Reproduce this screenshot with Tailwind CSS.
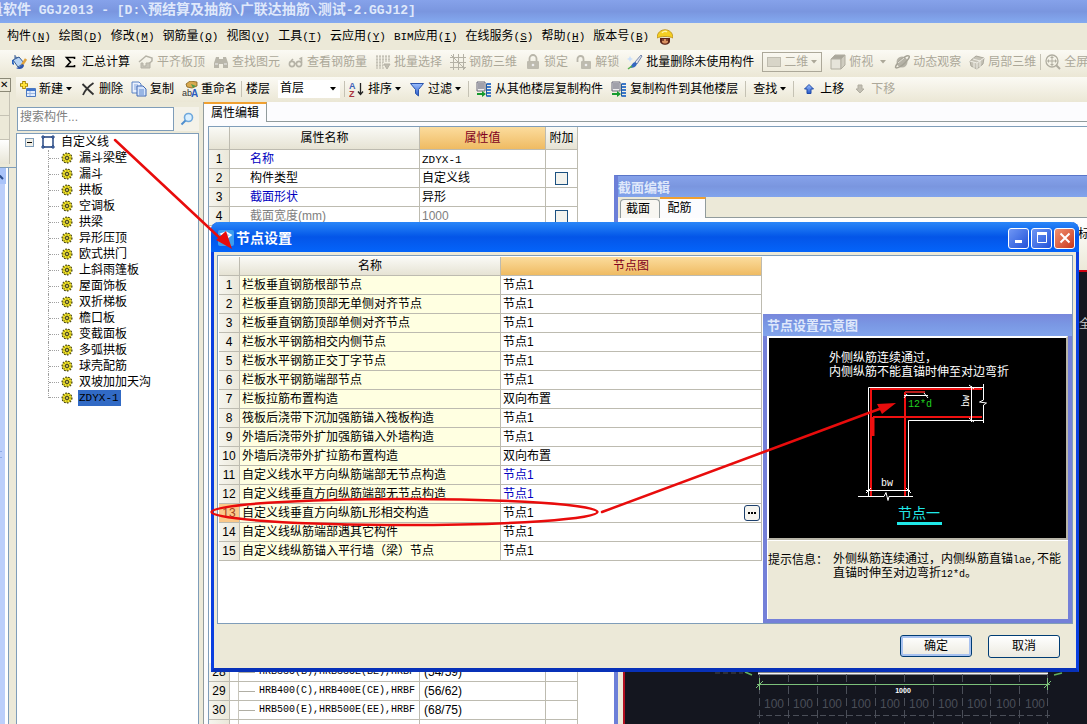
<!DOCTYPE html>
<html lang="zh-CN">
<head>
<meta charset="utf-8">
<title>GGJ2013</title>
<script src="https://cdn.jsdelivr.net/npm/@tailwindcss/browser@4"></script>
</head>
<body class="relative flex h-screen flex-col overflow-hidden bg-[#ece9d8] font-['Liberation_Sans','Noto_Sans_CJK_SC',sans-serif] text-[12px] leading-4 whitespace-nowrap text-black">

<svg class="absolute size-0">
  <symbol id="gear" viewBox="0 0 12 12">
    <circle cx="6" cy="6" r="4.800" fill="#f0e020" stroke="#3a3810" stroke-width="1.400" stroke-dasharray="1.600 1.300"/>
    <circle cx="6" cy="6" r="4.200" fill="#f4e628"/>
    <path d="M6 1v10M1 6h10M2.500 2.500l7 7M9.500 2.500l-7 7" stroke="#8b8416" stroke-width=".8"/>
    <circle cx="6" cy="6" r="1.500" fill="#fff36b" stroke="#222" stroke-width=".9"/>
  </symbol>
  <symbol id="down" viewBox="0 0 6 4"><path d="M0 0h6L3 3.500z" fill="currentColor"/></symbol>
  <linearGradient id="steel" x1="0" y1="0" x2="0" y2="1"><stop offset="0" stop-color="#9cc0ff"/><stop offset="1" stop-color="#2758c8"/></linearGradient>
  <symbol id="floors" viewBox="0 0 16 16">
    <path d="M1 1h8v9H1z" fill="#eee" stroke="#667"/><path d="M2 3h6M2 5h6M2 7h6" stroke="#556" stroke-width="1.200"/>
    <path d="M11 3h4M11 6h4M11 9h4M11 12h4M11 15h4" stroke="#3c78c8" stroke-width="1.800"/><path d="M10.500 2.500v13" stroke="#235a9c"/>
    <path d="M1 12h5v-2l4 3-4 3v-2H1z" fill="#169a2e"/>
  </symbol>
</svg>

<header class="flex h-[23px] shrink-0 items-center overflow-hidden bg-linear-to-b from-[#86a2ea] via-[#7a96df] to-[#84aaf0] pb-1 text-[14px] font-bold text-[#dfe8fb]">
  <h1 class="-ml-[11px] text-[14px]">量软件<span class="font-['Liberation_Mono',monospace] text-[13px] whitespace-pre"> GGJ2013 - [D:\</span>预结算及抽筋<span class="font-['Liberation_Mono',monospace] text-[13px]">\</span>广联达抽筋<span class="font-['Liberation_Mono',monospace] text-[13px]">\</span>测试<span class="font-['Liberation_Mono',monospace] text-[13px]">-2.GGJ12]</span></h1>
</header>

<nav id="menu" class="flex h-[27px] shrink-0 items-center gap-2 pl-[7px]"></nav>

<div class="flex h-[27px] shrink-0 items-start gap-2 overflow-hidden bg-linear-to-b from-[#fbfaf4] to-[#ebe7d5] pt-1 pl-3 text-[#aca899]">
  <button class="flex shrink-0 items-center gap-[3px] text-black"><svg class="size-4" viewBox="0 0 16 16"><path d="M3 1v5M3 3l5 1" stroke="#345a94" fill="none"/><path d="M1 6l6-3 5 6-6 4z" fill="#b7d4f4" stroke="#345a94"/><path d="M1 6c-1 3 0 4 1 4" stroke="#2a63bd" stroke-width="2" fill="none"/><path d="M14 5l-4 6" stroke="#e0a23c" stroke-width="2.500"/><path d="M10 10c-1 3-4 3-6 4 3 2 8 1 8-3z" fill="#2b55ad"/></svg>绘图</button>
  <button class="flex shrink-0 items-center gap-[3px] text-black"><svg class="size-4" viewBox="0 0 16 16"><path d="M11.500 5V3.500H3.500l4 4.500-4 4.500h8V11" fill="none" stroke="#000" stroke-width="1.600"/></svg>汇总计算</button>
  <button class="flex shrink-0 items-center gap-[3px]"><svg class="size-4" viewBox="0 0 16 16" fill="none" stroke="#b5b2a6"><path d="M1 8l7-6 6 2v3l-7 6" stroke-width="1.500"/><path d="M3 9v5h9V9H8v3H5V9z" fill="#c7c4b8"/></svg>平齐板顶</button>
  <button class="flex shrink-0 items-center gap-[3px]"><svg class="size-4" viewBox="0 0 16 16" fill="#b9b6aa"><path d="M3 3h3v2h4V3h3l2 6v5h-5v-4H6v4H1V9z"/><path d="M2 10h3M11 10h3" stroke="#eee"/></svg>查找图元</button>
  <button class="flex shrink-0 items-center gap-[3px]"><svg class="size-4" viewBox="0 0 16 16" fill="none" stroke="#b5b2a6" stroke-width="1.600"><circle cx="4" cy="10" r="2.600"/><circle cx="11" cy="10" r="2.600"/><path d="M6.500 9.500h2M13.500 9V4l-2 1M3 7l2-2"/></svg>查看钢筋量</button>
  <button class="flex shrink-0 items-center gap-[3px]"><svg class="size-4" viewBox="0 0 16 16" fill="none" stroke="#b5b2a6"><path d="M1 3h14M1 6h14M1 9h7M1 12h7M2 1v14M5 1v14M8 1v14M11 1v7M14 1v7" stroke-dasharray="2 1"/><path d="M9 10h6l-3 5z" fill="#c0bdb0"/></svg>批量选择</button>
  <button class="flex shrink-0 items-center gap-[3px]"><svg class="size-4" viewBox="0 0 16 16" fill="none" stroke="#b5b2a6"><path d="M0 3.500h16M0 8.500h16M0 13.500h16M3.500 0v16M8.500 0v16M13.500 0v16M1 1l14 14"/></svg>钢筋三维</button>
  <button class="flex shrink-0 items-center gap-[3px]"><svg class="size-4" viewBox="0 0 16 16"><path d="M4.500 8V4.500a3.500 3.500 0 0 1 7 0V8" fill="none" stroke="#b9b6aa" stroke-width="1.800"/><rect x="2" y="7" width="12" height="8" rx="1" fill="#bebbaf"/><circle cx="8" cy="11" r="1.300" fill="#eee"/></svg>锁定</button>
  <button class="flex shrink-0 items-center gap-[3px]"><svg class="size-4" viewBox="0 0 16 16"><path d="M1.500 8V5a3 3 0 0 1 6 0v3" fill="none" stroke="#b9b6aa" stroke-width="1.800"/><rect x="5" y="7" width="10" height="8" rx="1" fill="#bebbaf"/><circle cx="10" cy="11" r="1.300" fill="#eee"/></svg>解锁</button>
  <button class="flex shrink-0 items-center gap-[3px] text-black"><svg class="size-4" viewBox="0 0 16 16"><path d="M14 1L8 8l2 2 5-8z" fill="#dfe3ee" stroke="#556b9b" stroke-width=".8"/><path d="M8 8l2 2c-1 3-4 4-7 4 1-2 2-5 5-6z" fill="#3468c0"/><path d="M1 15l4-3" stroke="#53b04a" stroke-width="1.500"/><path d="M3 2l1 2 2 1-2 1-1 2-1-2-2-1 2-1z" fill="#cbe0fb"/></svg>批量删除未使用构件</button>
  <button class="-mt-0.5 flex h-5 w-[60px] shrink-0 items-center justify-between border border-[#aca899] px-1" aria-label="二维"><span class="h-2.5 w-3.5 border border-[#c0bdb0] bg-[#d8d5c8]"></span>二维<svg class="h-1 w-1.5"><use href="#down"/></svg></button>
  <button class="flex shrink-0 items-center gap-[3px]"><svg class="size-4" viewBox="0 0 16 16" stroke="#b0ada0"><path d="M1 5l4-4h10l-4 4z" fill="#aaa79b"/><path d="M1 5h10v10H1z" fill="#e6e4da"/><path d="M11 5l4-4v10l-4 4z" fill="#cfccc0"/></svg>俯视<svg class="ml-1 h-1 w-1.5"><use href="#down"/></svg></button>
  <button class="flex shrink-0 items-center gap-[3px]"><svg class="size-4" viewBox="0 0 16 16"><circle cx="8" cy="8" r="5.500" fill="#b5b2a6"/><path d="M2 14C-1 12 12 0 15 2c2 2-8 12-13 12" fill="none" stroke="#a5a295" stroke-width="1.500"/><path d="M4 9l6-5" stroke="#e5e3d9"/></svg>动态观察</button>
  <button class="flex shrink-0 items-center gap-[3px]"><svg class="size-4" viewBox="0 0 16 16"><path d="M1 7l6-5 8 2-1 6-6 5-6-3z" fill="#c5c2b6" stroke="#aaa79b"/><path d="M1 7l7 2 7-5M8 9v6M4 5l7 2v6M5 8v6" stroke="#f0eee6" fill="none"/></svg>局部三维</button>
  <span class="-mx-1 h-4 w-px shrink-0 bg-[#c5c2b4]"></span>
  <button class="flex shrink-0 items-center gap-[3px]"><svg class="size-4" viewBox="0 0 16 16" fill="none" stroke="#b0ada0"><circle cx="7" cy="7" r="6" stroke-width="1.300"/><path d="M7 3v8M3 7h8"/><path d="M7 2l2 2H5zM7 12l2-2H5zM2 7l2-2v4zM12 7l-2-2v4z" fill="#b0ada0" stroke="none"/><path d="M11 11l4 4" stroke-width="2"/></svg>全屏</button>
</div>

<div class="flex min-h-0 flex-1">
  <aside class="flex w-4 shrink-0 flex-col">
    <button class="mt-px h-3.5 w-[11px] border border-l-0 border-[#8b8977] text-left text-[10px] leading-3" aria-label="关闭">✕</button>
    <div class="h-6 w-2.5 border-r border-b border-[#c5c2b4]"></div>
    <div class="h-6 w-2.5 border-r border-b border-[#c5c2b4]"></div>
    <div class="h-6 w-2.5 border-r border-[#c5c2b4] bg-linear-to-b from-white to-[#e8e5d6]"></div>
    <div class="mt-[3px] flex min-h-0 flex-1 border-t border-[#7f9db9]">
      <div class="flex w-1.5 flex-col border-r border-white bg-[#bccffb]">
        <svg class="h-4 w-1.5 bg-[#a9c3f9]" viewBox="0 0 6 16"><path d="M-2 6l5 5" stroke="#2b4d8c" stroke-width="2"/></svg>
        <span class="my-auto h-[7px] w-0.5 border-y border-[#8ca9e6]"></span>
      </div>
      <div class="w-[3px] border-r border-[#7f9db9] bg-white"></div>
    </div>
  </aside>

  <div class="flex min-w-0 flex-1 flex-col">
    <div class="flex h-[25px] shrink-0 items-center gap-2 overflow-hidden bg-linear-to-b from-[#fbfaf4] to-[#ebe7d5] pb-px pl-1">
      <button class="flex shrink-0 items-center gap-[3px]"><svg class="size-4" viewBox="0 0 16 16"><path d="M4 0v8M0 4h8" stroke="#a98800" stroke-width="3.600"/><path d="M4 1v6M1 4h6" stroke="#ffe23a" stroke-width="2"/><path d="M6.500 7.500h9v8h-9z" fill="#e2ecfc" stroke="#4a78c0"/><path d="M7 8h8v2H7z" fill="#3f74cc"/><path d="M7 12.500h8M10 10v5" stroke="#9bb6e2"/></svg>新建<svg class="h-1 w-1.5"><use href="#down"/></svg></button>
      <button class="flex shrink-0 items-center gap-[3px]"><svg class="size-4" viewBox="0 0 16 16"><path d="M2.500 3c3 3 7 7 11 10.500M13.500 2C9 5 5 9 3 14" stroke="#333" stroke-width="1.800" fill="none"/></svg>删除</button>
      <button class="flex shrink-0 items-center gap-[3px]"><svg class="size-4" viewBox="0 0 16 16"><path d="M1 1h7l2 2v9H1z" fill="#eaf1fd" stroke="#5c84c4"/><path d="M3 4h4M3 6h4M3 8h3" stroke="#88a8dc"/><path d="M6 5h6l3 3v7H6z" fill="#d6e4fb" stroke="#3e68b4"/><path d="M8 9h5M8 11h5M8 13h5" stroke="#5b86cc"/></svg>复制</button>
      <button class="flex shrink-0 items-center gap-[3px]"><svg class="size-4" viewBox="0 0 16 16"><path d="M4 3l4-3 7 1v4l-5 2-5-1z" fill="#d9a94e" stroke="#80601c" stroke-width=".8"/><path d="M9 3l5 2-3 2z" fill="#4c9a4a"/><text x="0" y="15" font-size="9" fill="#333">ab</text><text x="9" y="15.500" font-size="10" font-weight="bold" fill="#2a5cc0">A</text></svg>重命名</button>
      <span class="-mx-1 h-4 w-px shrink-0 bg-[#c5c2b4]"></span>
      <label for="floor" class="shrink-0">楼层</label>
      <span class="relative flex shrink-0 items-center">
        <select id="floor" class="h-[18px] w-[62px] appearance-none bg-white pb-0.5 pl-0.5"><option>首层</option></select>
        <svg class="pointer-events-none absolute right-1 h-1 w-1.5"><use href="#down"/></svg>
      </span>
      <span class="-mx-1 h-4 w-px shrink-0 bg-[#c5c2b4]"></span>
      <button class="flex shrink-0 items-center gap-[3px]"><svg class="size-4" viewBox="0 0 16 16"><text x="0" y="7.500" font-size="9" font-weight="bold" fill="#3e62b8">A</text><text x="0" y="15.500" font-size="9" font-weight="bold" fill="#a8323c">Z</text><path d="M11.500 2v11M9 10.500l2.500 3 2.500-3" stroke="#222" stroke-width="1.300" fill="none"/></svg>排序<svg class="h-1 w-1.5"><use href="#down"/></svg></button>
      <button class="flex shrink-0 items-center gap-[3px]"><svg class="size-4" viewBox="0 0 16 16"><path d="M1.500 2.500h13l-5 6V15l-3-2.500v-4z" fill="url(#steel)" stroke="#2c55ac"/></svg>过滤<svg class="h-1 w-1.5"><use href="#down"/></svg></button>
      <span class="-mx-px h-4 w-px shrink-0 bg-[#c5c2b4]"></span>
      <button class="flex shrink-0 items-center gap-[3px]"><svg class="size-4"><use href="#floors"/></svg>从其他楼层复制构件</button>
      <button class="flex shrink-0 items-center gap-[3px]"><svg class="size-4"><use href="#floors"/></svg>复制构件到其他楼层</button>
      <span class="-mx-px h-4 w-px shrink-0 bg-[#c5c2b4]"></span>
      <button class="flex shrink-0 items-center gap-[3px]">查找<svg class="h-1 w-1.5"><use href="#down"/></svg></button>
      <span class="-mx-px h-4 w-px shrink-0 bg-[#c5c2b4]"></span>
      <button class="flex shrink-0 items-center gap-[3px]"><svg class="size-4" viewBox="0 0 16 16"><path d="M8 3.500l4.500 4.500H10v4.500H6V8H3.500z" fill="url(#steel)" stroke="#1f4aa8"/></svg>上移</button>
      <button class="flex shrink-0 items-center gap-[3px] text-[#aca899]"><svg class="size-4" viewBox="0 0 16 16"><path d="M8 12L4 8h2V4h4v4h2z" fill="#c2bfb3" stroke="#b0ada0"/></svg>下移</button>
    </div>

    <main class="flex min-h-0 flex-1">
      <section class="flex w-[183px] shrink-0 flex-col pt-[5px]">
        <div class="flex h-6 shrink-0 items-center pl-px">
          <input type="text" aria-label="搜索构件" placeholder="搜索构件..." class="h-6 w-[157px] border border-[#7f9db9] bg-white px-0.5 pb-1 placeholder:text-[#808080]">
          <button class="flex h-6 flex-1 items-center justify-center bg-[#f4f2e9]" aria-label="搜索"><svg class="size-3.5" viewBox="0 0 14 14"><circle cx="8.500" cy="5.500" r="4" fill="#d9efff" stroke="#6fa8dc" stroke-width="1.600"/><path d="M5.500 8.500L1.500 12.500" stroke="#4f8fcf" stroke-width="2"/></svg></button>
        </div>
        <div class="mt-0.5 min-h-0 flex-1 overflow-hidden border border-b-0 border-[#7f9db9] bg-white">
          <div class="flex h-4 items-center pl-2">
            <span class="flex size-[9px] items-center justify-center border border-[#7f9db9] bg-[#f1efe6]"><span class="h-px w-[5px] bg-black"></span></span>
            <svg class="ml-[7px] size-3.5" viewBox="0 0 14 14" fill="#fff" stroke="#1c3f7c"><path d="M2 2h10v10H2z" stroke-width="1.400"/><path d="M1 1h2v2H1zM11 1h2v2h-2zM1 11h2v2H1zM11 11h2v2h-2z" fill="#8fb0e8"/></svg>
            <span class="ml-1.5">自定义线</span>
          </div>
          <ul id="tree" class="pl-[31px]"></ul>
        </div>
      </section>

      <section class="ml-1 flex min-w-0 flex-1 flex-col border-l border-[#919b9c] bg-[#fcfcfe]">
        <div class="flex h-5 shrink-0 bg-[#fcfcfe]">
          <button class="h-full w-[63px] border-t-2 border-r border-[#919b9c] border-t-[#f0a030] bg-[#fcfcfe]">属性编辑</button>
          <div class="flex-1 border-b border-[#919b9c]"></div>
        </div>
        <div class="mt-1 ml-1 min-h-0 flex-1 overflow-hidden border-t border-l border-[#7f9db9] bg-white">
          <table class="w-[369px] table-fixed border-separate border-spacing-0">
            <colgroup><col class="w-[21px]"><col class="w-[190px]"><col class="w-[126px]"><col class="w-[32px]"></colgroup>
            <thead><tr class="h-[23px]">
              <th class="border-r border-b border-[#bdbbb0] bg-linear-to-b from-[#fafaf6] to-[#e6e3d4]"></th>
              <th class="border-r border-b border-[#bdbbb0] bg-linear-to-b from-[#fafaf6] to-[#e6e3d4] p-0 font-normal">属性名称</th>
              <th class="border-r border-b border-[#bdbbb0] bg-linear-to-b from-[#fbdc9c] to-[#efbb62] p-0 font-normal text-[#800020]">属性值</th>
              <th class="border-r border-b border-[#bdbbb0] bg-linear-to-b from-[#fafaf6] to-[#e6e3d4] p-0 font-normal">附加</th>
            </tr></thead>
            <tbody id="props"></tbody>
          </table>
        </div>
      </section>
    </main>
  </div>
</div>

<!-- Section editor window -->
<section class="absolute top-[175px] right-0 bottom-0 left-[614px] flex flex-col border-t border-l-4 border-t-[#5a76c8] border-l-[#6c7fd8] bg-[#ece9d8]">
  <h2 class="h-[21px] shrink-0 bg-linear-to-b from-[#86a2ea] via-[#7a96df] to-[#82a4ec] pt-1 text-[13px] leading-4 font-bold text-[#dfe8fb]">截面编辑</h2>
  <div class="flex h-[21px] shrink-0 pl-0.5">
    <button class="mt-0.5 w-10 rounded-t-sm border border-b-0 border-[#919b9c] bg-[#f8f7f2] pr-1">截面</button>
    <button class="w-[46px] border-t-2 border-r border-[#919b9c] border-t-[#f0a030] bg-[#fcfcfe] pr-1.5 pb-0.5">配筋</button>
    <div class="flex-1 border-b border-[#919b9c]"></div>
  </div>
  <div class="flex h-[52px] shrink-0 items-center justify-end overflow-hidden bg-linear-to-b from-white to-[#ece9d8] pb-5"><span class="-mr-[15px]">标注</span></div>
  <div class="ml-[5px] min-h-0 flex-1 border-t-2 border-l-2 border-t-[#d00010] border-l-[#b01020] bg-[#14161f]">
    <svg class="h-[452px] w-[462px]" viewBox="625 272 462 452" fill="none">
      <text x="1079" y="328" font-size="12" fill="#c8c8c8">全部</text>
      <path d="M758 673.500h290" stroke="#f4f4f4" stroke-width="2"/>
      <path d="M745 672l7 3M1054 675l8-2" stroke="#63b060" stroke-width="1.500"/>
      <path d="M715 673h28" stroke="#444852" stroke-dasharray="5 3"/>
      <path d="M759.500 674v50M788.500 674v50M817.500 674v50M846.500 674v50M875.500 674v50M904.500 674v50M933.500 674v50M962.500 674v50M990.500 674v50M1019.500 674v50M1047.500 674v50" stroke="#4a4e58" stroke-dasharray="8 4"/>
      <path d="M757 715.500h293" stroke="#4a4e58" stroke-dasharray="6 3"/>
      <path d="M757 684.500h293M759.500 678v12M1047.500 678v12M756 688l7-7M1044 688l7-7" stroke="#7cc07a"/>
      <text x="903" y="693" font-size="7" font-weight="bold" fill="#fff" text-anchor="middle">1000</text>
      <g id="hundreds" font-size="12" fill="#4a4e58" text-anchor="middle"></g>
    </svg>
  </div>
</section>

<!-- Node settings dialog -->
<div role="dialog" aria-labelledby="dlg" class="absolute top-[222px] left-[211px] flex h-[450px] w-[868px] flex-col rounded-t-lg border-x-3 border-b-4 border-[#0a3fe0] border-b-[#0831b8] bg-[#ece9d8]">
  <div class="-mx-[3px] flex h-[30px] shrink-0 items-center rounded-t-lg bg-linear-to-b from-[#2a86f8] via-[#0455e8] to-[#0464fa] pt-0.5 pr-1 pl-[7px]">
    <svg class="size-4" viewBox="0 0 16 16"><rect width="16" height="16" rx="2" fill="#3b9ef0"/><path d="M3 4l5-2 5 3-4 3zM4 12l4-3" stroke="#fff" stroke-width="1.500" fill="#9ed4ff"/></svg>
    <h2 id="dlg" class="ml-0.5 flex-1 text-[14px] font-bold text-white">节点设置</h2>
    <div class="flex gap-0.5">
      <button aria-label="最小化" class="flex size-[21px] items-center justify-center rounded-[3px] border border-white bg-linear-to-br from-[#6f96f4] to-[#2350d8]"><svg class="size-4" viewBox="0 0 16 16"><path d="M4 11.500h7" stroke="#fff" stroke-width="3"/></svg></button>
      <button aria-label="最大化" class="flex size-[21px] items-center justify-center rounded-[3px] border border-white bg-linear-to-br from-[#6f96f4] to-[#2350d8]"><svg class="size-4" viewBox="0 0 16 16"><path d="M3 3.500h10" stroke="#fff" stroke-width="3"/><path d="M3.500 3v9.500h9V3" stroke="#fff" fill="none"/></svg></button>
      <button aria-label="关闭" class="flex size-[21px] items-center justify-center rounded-[3px] border border-white bg-linear-to-br from-[#f09070] to-[#c83418]"><svg class="size-4" viewBox="0 0 16 16"><path d="M3.500 3.500l9 9M12.500 3.500l-9 9" stroke="#fff" stroke-width="2"/></svg></button>
    </div>
  </div>
  <div class="mx-[3px] mt-[3px] flex h-[369px] shrink-0 border border-[#7f9db9] bg-white">
    <div class="w-[545px] shrink-0 pt-px pl-px">
      <table class="w-[543px] table-fixed border-separate border-spacing-0">
        <colgroup><col class="w-[21px]"><col class="w-[261px]"><col class="w-[261px]"></colgroup>
        <thead><tr class="h-[19px]">
          <th class="border-r border-b border-[#bdbbb0] bg-linear-to-b from-[#fafaf6] to-[#e6e3d4]"></th>
          <th class="border-r border-b border-[#bdbbb0] bg-linear-to-b from-[#fafaf6] to-[#e6e3d4] p-0 font-normal">名称</th>
          <th class="border-r border-b border-[#bdbbb0] bg-linear-to-b from-[#fbdc9c] to-[#efbb62] p-0 font-normal text-[#800020]">节点图</th>
        </tr></thead>
        <tbody id="nodes"></tbody>
      </table>
    </div>
    <section class="flex h-[309px] min-w-0 flex-1 flex-col self-end border-x-4 border-b-4 border-[#7480d8] bg-[#ece9d8]">
      <h3 class="-mx-1 h-[22px] shrink-0 bg-linear-to-b from-[#7888dc] via-[#7a98e4] to-[#82a4ec] pt-1 pl-1 text-[13px] leading-4 font-bold text-[#dfe8fb]">节点设置示意图</h3>
      <div class="border-t-2 border-r-2 border-b-2 border-l-2 border-white border-r-[#b8b5a8] border-b-[#b8b5a8] bg-black">
        <svg class="block h-[200px] w-full" viewBox="769 338 297 200" preserveAspectRatio="xMinYMin" fill="none" stroke="#fff">
          <g stroke="none" fill="#fff" font-size="12"><text x="829" y="362">外侧纵筋连续通过，</text><text x="829" y="376">内侧纵筋不能直锚时伸至对边弯折</text></g>
          <path d="M868.500 496V387.500H983M908.500 496V420.500H983"/>
          <path d="M871 496V389H982M873 417H982M905 496V392" stroke="#f01010" stroke-width="2"/>
          <path d="M873 417v19" stroke="#f01010" stroke-width="3"/>
          <path d="M905 392h20" stroke="#b81c1c" stroke-width="2"/>
          <path d="M904 395.500h24M904 398l3-4M924 393l4 5M971.500 386v36M969 385l5 4M969 418l5 4M983.500 384v16l-4 2 7 1-3 2v18M866 490.500h44M866 493l5-5M906 488l5 5M858 496.500h26l2-4 2 8 1-4h24"/>
          <g stroke="none" font-family="Liberation Mono" font-size="10"><text x="908" y="407" fill="#20d020">12*d</text><text x="881" y="486" fill="#fff">bw</text><text transform="translate(969 407) rotate(-90)" fill="#fff">bw</text></g>
          <text x="898" y="518" font-size="14" fill="#20e8e8" stroke="none">节点一</text>
          <path d="M897 523.500h45" stroke="#20e8e8" stroke-width="3"/>
        </svg>
      </div>
      <div class="flex flex-1 border-t border-l border-white pt-3">
        <span class="w-[65px] shrink-0 leading-[14px]">提示信息：</span>
        <p class="leading-3">外侧纵筋连续通过，内侧纵筋直锚<span class="font-['Liberation_Mono',monospace] text-[10px]">lae,</span>不能<br>直锚时伸至对边弯折<span class="font-['Liberation_Mono',monospace] text-[10px]">12*d</span>。</p>
      </div>
    </section>
  </div>
  <div class="flex flex-1 items-center justify-end gap-4 pr-4">
    <button class="h-[22px] w-[72px] rounded-[3px] border border-[#003c74] bg-linear-to-b from-white to-[#eceae0] shadow-[inset_0_0_0_2px_#a8c2f0]">确定</button>
    <button class="h-[23px] w-[72px] rounded-[3px] border border-[#003c74] bg-linear-to-b from-white to-[#eceae0]">取消</button>
  </div>
</div>

<!-- Annotations -->
<svg class="pointer-events-none absolute top-0 left-0 h-[724px] w-[1087px]" viewBox="0 0 1087 724" fill="none" stroke="#e80c0c" stroke-width="2.500" stroke-linecap="round">
  <path d="M115 140L222 240M602 512L882 408"/>
  <path d="M232 249l-16-9 10-9zM896 403l-19 1 5 10z" fill="#e80c0c" stroke="none"/>
  <ellipse cx="404.500" cy="512" rx="193" ry="13"/>
</svg>

<script>
const $ = id => document.getElementById(id);
$('menu').innerHTML = [['构件','N'],['绘图','D'],['修改','M'],['钢筋量','Q'],['视图','V'],['工具','T'],['云应用','Y'],['BIM应用','I'],['在线服务','S'],['帮助','H'],['版本号','B']]
  .map(([t, k]) => `<button class="shrink-0">${t.replace('BIM', `<span class="font-['Liberation_Mono',monospace] text-[11px]">BIM</span>`)}<span class="font-['Liberation_Mono',monospace] text-[11px]">(<u>${k}</u>)</span></button>`).join('')
  + `<svg class="size-4 shrink-0" viewBox="0 0 16 16"><path d="M3 9h10v3c0 5-10 5-10 0z" fill="#5c2418"/><path d="M5 10h6v3c-1 2-5 2-6 0z" fill="#d89060"/><path d="M5 11h2M9 11h2" stroke="#300"/><path d="M0 9c0-11 16-11 16 0-4-2-12-2-16 0z" fill="#f5cf22" stroke="#b88a10" stroke-width=".8"/><path d="M5 4c1-2 4-2 5-1" stroke="#fff3a0" stroke-width="1.500" fill="none"/></svg>`;

const leaves = ['漏斗梁壁','漏斗','拱板','空调板','拱梁','异形压顶','欧式拱门','上斜雨篷板','屋面饰板','双折梯板','檐口板','变截面板','多弧拱板','球壳配筋','双坡加加天沟','ZDYX-1'];
$('tree').innerHTML = leaves.map((t, i) => {
  const last = i === leaves.length - 1;
  return `<li class="flex h-4 items-center"><span class="${last ? 'h-2 self-start' : 'h-4'} flex w-[13px] items-center border-l border-dotted border-[#a0a0a0]"><span class="${last ? 'mt-[7px]' : ''} h-px w-2.5 border-t border-dotted border-[#a0a0a0]"></span></span><svg class="size-3"><use href="#gear"/></svg>`
    + (last ? `<span class="ml-[5px] h-4 bg-[#316ac5] pr-0.5 pl-px font-['Liberation_Mono',monospace] text-[11px]">${t}</span>` : `<span class="ml-1.5">${t}</span>`) + `</li>`;
}).join('');

const num = (n, on) => `<td class="${on ? 'bg-[#fbc98a] text-[#a04020]' : 'bg-linear-to-r from-[#f6f5ee] to-[#ebe8da]'} border-r border-b border-[#bdbbb0] p-0 text-center">${n}</td>`;
const prop = (n, name, val, color, box) => `<tr class="h-[19px]">${num(n)}<td class="border-r border-b border-[#bdbbb0] p-0 pl-5 ${color}">${name}</td><td class="border-r border-b border-[#bdbbb0] p-0 pl-0.5 ${color === 'text-[#808080]' ? color : ''}">${val}</td><td class="border-r border-b border-[#bdbbb0] p-0 text-center leading-none">${box ? `<input type="checkbox" aria-label="${name}" class="size-[13px] appearance-none border border-[#1c5180] bg-[#f3f3ee] align-middle">` : ''}</td></tr>`;
const steel = (n, name, val) => `<tr class="h-[19px]">${num(n)}<td class="overflow-hidden border-r border-b border-[#bdbbb0] p-0"><div class="ml-2 flex h-[18px] items-center border-l border-[#c8c6bc]"><span class="mr-1 h-px w-4 bg-[#b0aea4]"></span><span class="font-['Liberation_Mono',monospace] text-[10px]">${name}</span></div></td><td class="border-r border-b border-[#bdbbb0] p-0 pl-1">${val}</td><td class="border-r border-b border-[#bdbbb0] p-0"></td></tr>`;
$('props').innerHTML = prop(1, '名称', `<span class="font-['Liberation_Mono',monospace] text-[11px]">ZDYX-1</span>`, 'text-[#0000c0]', false)
  + prop(2, '构件类型', '自定义线', 'text-black', true)
  + prop(3, '截面形状', '异形', 'text-[#0000c0]', false)
  + prop(4, '截面宽度(mm)', '1000', 'text-[#808080]', true)
  + `<tr class="h-[437px]"><td colspan="4" class="p-0"></td></tr>`
  + steel(28, 'HRB335(B),HRB335E(BE),HRBF', '(54/59)')
  + steel(29, 'HRB400(C),HRB400E(CE),HRBF', '(56/62)')
  + steel(30, 'HRB500(E),HRB500E(EE),HRBF', '(68/75)')
  + steel('', '', '');

$('nodes').innerHTML = [
  ['栏板垂直钢筋根部节点','节点1'],['栏板垂直钢筋顶部无单侧对齐节点','节点1'],['栏板垂直钢筋顶部单侧对齐节点','节点1'],['栏板水平钢筋相交内侧节点','节点1'],['栏板水平钢筋正交丁字节点','节点1'],['栏板水平钢筋端部节点','节点1'],['栏板拉筋布置构造','双向布置'],['筏板后浇带下沉加强筋锚入筏板构造','节点1'],['外墙后浇带外扩加强筋锚入外墙构造','节点1'],['外墙后浇带外扩拉筋布置构造','双向布置'],['自定义线水平方向纵筋端部无节点构造','节点1'],['自定义线垂直方向纵筋端部无节点构造','节点1'],['自定义线垂直方向纵筋L形相交构造','节点1'],['自定义线纵筋端部遇其它构件','节点1'],['自定义线纵筋锚入平行墙（梁）节点','节点1']
].map(([a, b], i) => `<tr class="h-[19px]">${num(i + 1, i === 12)}<td class="border-r border-b border-[#bdbbb0] bg-[#ffffe1] p-0 pl-0.5">${a}</td><td class="border-r border-b border-[#bdbbb0] p-0 pl-0.5 ${i === 10 || i === 11 ? 'text-[#0000c0]' : ''}"><div class="flex h-[18px] items-center justify-between pr-px">${b}${i === 12 ? `<button aria-label="选择节点图" class="flex size-4 items-center justify-center gap-px rounded-[3px] border border-[#1c3f6c] bg-[#f6f5f0]"><i class="size-0.5 bg-black"></i><i class="size-0.5 bg-black"></i><i class="size-0.5 bg-black"></i></button>` : ''}</div></td></tr>`).join('');

$('hundreds').innerHTML = Array.from({length: 10}, (_, i) => `<text x="${774 + i * 29}" y="708">100</text>`).join('');
</script>
</body>
</html>
